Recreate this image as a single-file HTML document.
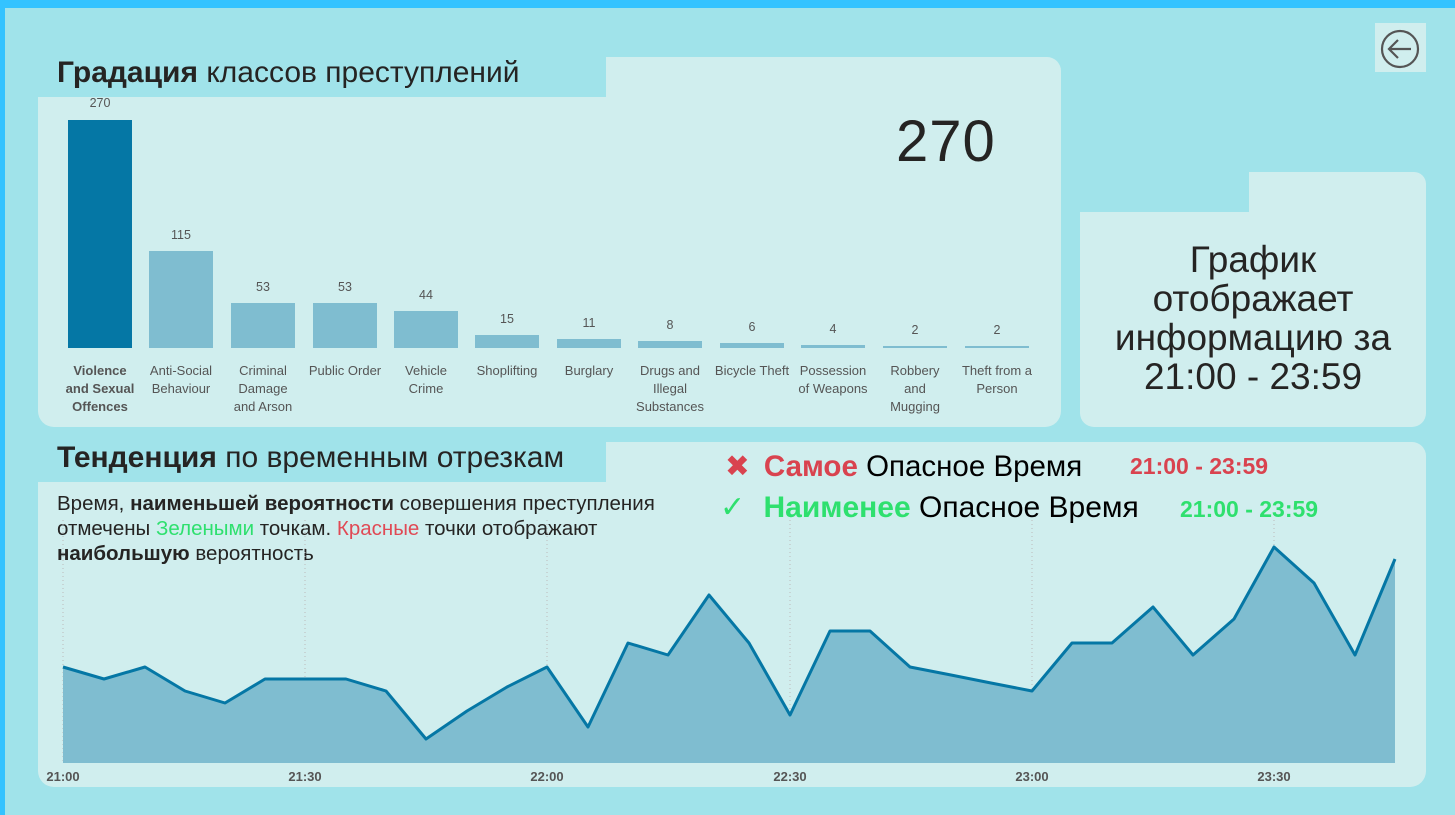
<!DOCTYPE html>
<html><head><meta charset="utf-8"><style>
*{margin:0;padding:0;box-sizing:border-box}
body{width:1455px;height:815px;background:#a0e3ea;position:relative;overflow:hidden;font-family:"Liberation Sans","DejaVu Sans",sans-serif;color:#252423}
.topbar{position:absolute;left:0;top:0;width:1455px;height:8px;background:#33c3ff}
.leftbar{position:absolute;left:0;top:0;width:5px;height:815px;background:#33c3ff}
.p{position:absolute;background:#d0eeee}
.t{position:absolute;white-space:nowrap}
.lbl{position:absolute;font-size:13px;color:#555;text-align:center;line-height:18px;width:80px}
.val{position:absolute;font-size:12.5px;color:#555;text-align:center;width:60px}
</style></head><body>
<div class="topbar"></div><div class="leftbar"></div>

<div class="p" style="left:38px;top:97px;width:1023px;height:330px;border-radius:0 0 16px 16px"></div>
<div class="p" style="left:606px;top:57px;width:455px;height:60px;border-radius:0 14px 0 0"></div>
<div class="t" style="left:57px;top:56px;font-size:30px"><b>Градация</b> классов преступлений</div>
<div class="t" style="left:896px;top:108px;font-size:58px;letter-spacing:1px;color:#252423">270</div>

<svg style="position:absolute;left:0;top:0" width="1455" height="815">
<g fill="#7fbdd0">
<rect x="68" y="120" width="64" height="228" fill="#0577a5"/>
<rect x="149" y="251" width="64" height="97"/>
<rect x="231" y="303" width="64" height="45"/>
<rect x="313" y="303" width="64" height="45"/>
<rect x="394" y="311" width="64" height="37"/>
<rect x="475" y="335" width="64" height="13"/>
<rect x="557" y="339" width="64" height="9"/>
<rect x="638" y="341" width="64" height="7"/>
<rect x="720" y="343" width="64" height="5"/>
<rect x="801" y="345" width="64" height="3"/>
<rect x="883" y="346" width="64" height="2"/>
<rect x="965" y="346" width="64" height="2"/>
</g>
</svg>
<div class="val" style="left:70px;top:96px">270</div>
<div class="val" style="left:151px;top:228px">115</div>
<div class="val" style="left:233px;top:280px">53</div>
<div class="val" style="left:315px;top:280px">53</div>
<div class="val" style="left:396px;top:288px">44</div>
<div class="val" style="left:477px;top:312px">15</div>
<div class="val" style="left:559px;top:316px">11</div>
<div class="val" style="left:640px;top:318px">8</div>
<div class="val" style="left:722px;top:320px">6</div>
<div class="val" style="left:803px;top:322px">4</div>
<div class="val" style="left:885px;top:323px">2</div>
<div class="val" style="left:967px;top:323px">2</div>
<div class="lbl" style="left:60px;top:362px;font-weight:bold;padding:0 4px">Violence and Sexual Offences</div>
<div class="lbl" style="left:141px;top:362px">Anti-Social Behaviour</div>
<div class="lbl" style="left:223px;top:362px;width:80px;padding:0 8px">Criminal Damage and Arson</div>
<div class="lbl" style="left:303px;top:362px;width:84px">Public Order</div>
<div class="lbl" style="left:386px;top:362px;padding:0 10px">Vehicle Crime</div>
<div class="lbl" style="left:467px;top:362px">Shoplifting</div>
<div class="lbl" style="left:549px;top:362px">Burglary</div>
<div class="lbl" style="left:630px;top:362px;padding:0 6px">Drugs and Illegal Substances</div>
<div class="lbl" style="left:708px;top:362px;width:88px">Bicycle Theft</div>
<div class="lbl" style="left:793px;top:362px">Possession of Weapons</div>
<div class="lbl" style="left:875px;top:362px;padding:0 14px">Robbery and Mugging</div>
<div class="lbl" style="left:957px;top:362px">Theft from a Person</div>

<div class="p" style="left:1375px;top:23px;width:51px;height:49px"></div>
<svg style="position:absolute;left:1380px;top:29px" width="40" height="40" viewBox="0 0 40 40">
<circle cx="20" cy="20" r="18" fill="none" stroke="#555" stroke-width="2.2"/>
<path d="M31 20H9M18 11L9 20L18 29" fill="none" stroke="#555" stroke-width="2.2"/>
</svg>

<div class="p" style="left:1080px;top:212px;width:346px;height:215px;border-radius:0 0 14px 14px"></div>
<div class="p" style="left:1249px;top:172px;width:177px;height:60px;border-radius:0 12px 0 0"></div>
<div class="t" style="left:1080px;top:240px;width:346px;text-align:center;font-size:37px;line-height:39px;white-space:normal">График<br>отображает<br>информацию за<br>21:00 - 23:59</div>

<div class="p" style="left:38px;top:482px;width:1388px;height:305px;border-radius:0 0 16px 16px"></div>
<div class="p" style="left:606px;top:442px;width:820px;height:60px;border-radius:0 14px 0 0"></div>
<div class="t" style="left:57px;top:441px;font-size:30px"><b>Тенденция</b> по временным отрезкам</div>
<div class="t" style="left:57px;top:491px;font-size:20.5px;line-height:25px">Время, <b>наименьшей вероятности</b> совершения преступления<br>отмечены <span style="color:#2ee06e">Зелеными</span> точкам. <span style="color:#e04a55">Красные</span> точки отображают<br><b>наибольшую</b> вероятность</div>

<div class="t" style="left:725px;top:449px;font-size:29.5px"><span style="color:#d9434f;font-weight:bold">✖</span> <span style="color:#d9434f;font-weight:bold;margin-left:6px">Самое</span> <span style="color:#000">Опасное Время</span></div>
<div class="t" style="left:1130px;top:453px;font-size:23px;font-weight:bold;color:#d9434f">21:00 - 23:59</div>
<div class="t" style="left:720px;top:490px;font-size:30px;color:#2ee06e;font-weight:bold">✓ <span style="font-size:30px;margin-left:10px">Наименее</span> <span style="color:#000;font-weight:normal;font-size:30px">Опасное Время</span></div>
<div class="t" style="left:1180px;top:496px;font-size:23px;font-weight:bold;color:#2ee06e">21:00 - 23:59</div>

<svg style="position:absolute;left:0;top:0" width="1455" height="815">
<g stroke="#bbb" stroke-dasharray="1 3" stroke-width="1">
<line x1="63" y1="520" x2="63" y2="763"/><line x1="305" y1="520" x2="305" y2="763"/><line x1="547" y1="520" x2="547" y2="763"/><line x1="790" y1="520" x2="790" y2="763"/><line x1="1032" y1="520" x2="1032" y2="763"/><line x1="1274" y1="520" x2="1274" y2="763"/>
</g>
<polygon fill="#7fbdd0" points="63,763 63,667 104,679 145,667 185,691 225,703 265,679 305,679 346,679 386,691 426,739 467,711 507,687 547,667 588,727 628,643 668,655 709,595 749,643 790,715 830,631 870,631 910,667 951,675 991,683 1032,691 1072,643 1112,643 1153,607 1193,655 1234,619 1274,547 1314,583 1355,655 1395,559 1395,763"/>
<polyline fill="none" stroke="#0577a5" stroke-width="3" stroke-linejoin="round" points="63,667 104,679 145,667 185,691 225,703 265,679 305,679 346,679 386,691 426,739 467,711 507,687 547,667 588,727 628,643 668,655 709,595 749,643 790,715 830,631 870,631 910,667 951,675 991,683 1032,691 1072,643 1112,643 1153,607 1193,655 1234,619 1274,547 1314,583 1355,655 1395,559"/>
<g font-family="Liberation Sans,sans-serif" font-size="13" font-weight="bold" fill="#555" text-anchor="middle">
<text x="63" y="781">21:00</text><text x="305" y="781">21:30</text><text x="547" y="781">22:00</text><text x="790" y="781">22:30</text><text x="1032" y="781">23:00</text><text x="1274" y="781">23:30</text>
</g>
</svg>
</body></html>
